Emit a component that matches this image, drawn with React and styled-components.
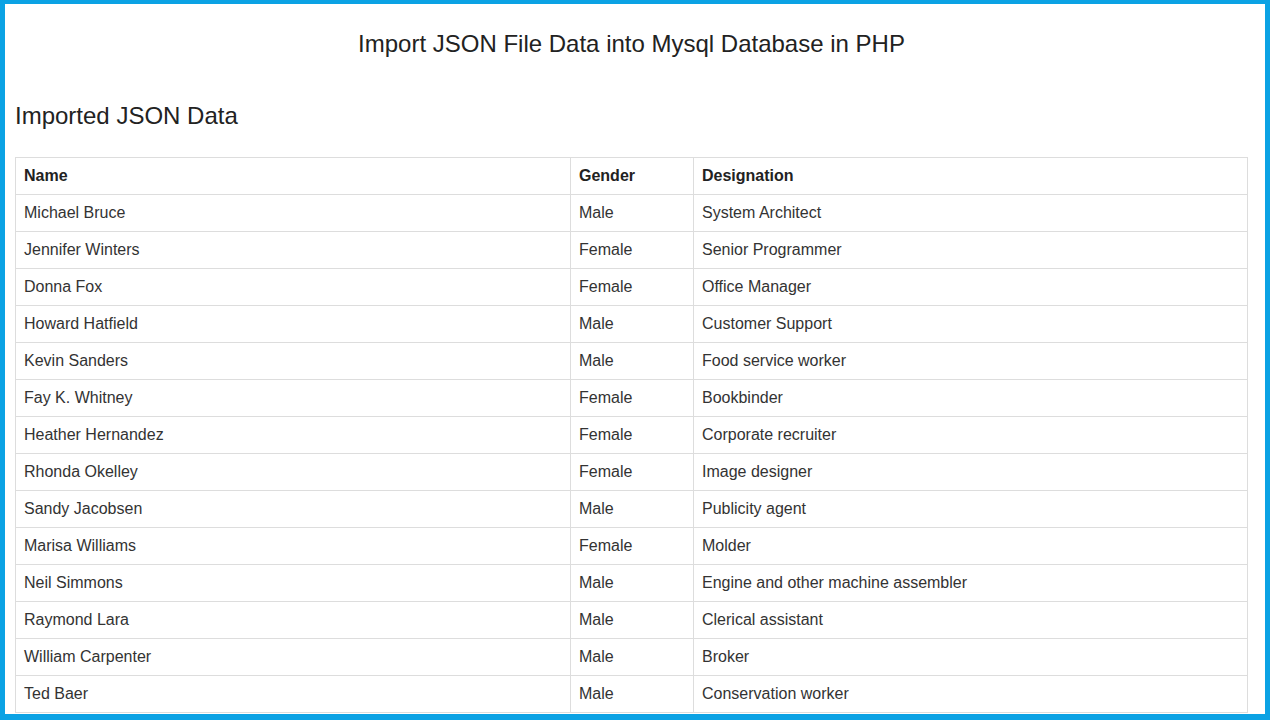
import React from 'react';
import styled, { createGlobalStyle } from 'styled-components';

const GlobalStyle = createGlobalStyle`
  html, body {
    margin: 0;
    padding: 0;
    background: #fff;
  }
  body {
    font-family: "Liberation Sans", Arial, Helvetica, sans-serif;
    font-size: 16px;
    line-height: 1.25;
    color: #333;
  }
`;

const Frame = styled.div`
  box-sizing: border-box;
  height: 720px;
  overflow: hidden;
  border-style: solid;
  border-color: #0ba2e4;
  border-width: 4px 5px 6px 5px;
  background: #fff;
`;

const Container = styled.div`
  padding: 27px 17px 0 10px;
`;

const PageTitle = styled.h3`
  margin: 0;
  font-size: 24px;
  font-weight: 400;
  line-height: 26px;
  text-align: center;
  color: #222;
`;

const SectionTitle = styled.h3`
  margin: 46px 0 28px;
  font-size: 24px;
  font-weight: 400;
  line-height: 26px;
  color: #222;
`;

const Table = styled.table`
  width: 100%;
  border-collapse: collapse;
  border-spacing: 0;
  border: 1px solid #ddd;
`;

const Cell = styled.td`
  box-sizing: border-box;
  height: 37px;
  padding: 8px;
  border: 1px solid #ddd;
  vertical-align: top;
  text-align: left;
  font-size: 16px;
  line-height: 20px;
  font-weight: ${({ $head }) => ($head ? 700 : 400)};
  color: ${({ $head }) => ($head ? '#222' : '#333')};
  width: ${({ $w }) => $w || 'auto'};
`;

const employees = [
  ['Michael Bruce', 'Male', 'System Architect'],
  ['Jennifer Winters', 'Female', 'Senior Programmer'],
  ['Donna Fox', 'Female', 'Office Manager'],
  ['Howard Hatfield', 'Male', 'Customer Support'],
  ['Kevin Sanders', 'Male', 'Food service worker'],
  ['Fay K. Whitney', 'Female', 'Bookbinder'],
  ['Heather Hernandez', 'Female', 'Corporate recruiter'],
  ['Rhonda Okelley', 'Female', 'Image designer'],
  ['Sandy Jacobsen', 'Male', 'Publicity agent'],
  ['Marisa Williams', 'Female', 'Molder'],
  ['Neil Simmons', 'Male', 'Engine and other machine assembler'],
  ['Raymond Lara', 'Male', 'Clerical assistant'],
  ['William Carpenter', 'Male', 'Broker'],
  ['Ted Baer', 'Male', 'Conservation worker'],
];

function App() {
  return (
    <>
      <GlobalStyle />
      <Frame>
        <Container>
          <PageTitle>Import JSON File Data into Mysql Database in PHP</PageTitle>
          <SectionTitle>Imported JSON Data</SectionTitle>
          <Table>
            <thead>
              <tr>
                <Cell as="th" $head $w="555px">Name</Cell>
                <Cell as="th" $head $w="123px">Gender</Cell>
                <Cell as="th" $head>Designation</Cell>
              </tr>
            </thead>
            <tbody>
              {employees.map(([name, gender, designation]) => (
                <tr key={name}>
                  <Cell>{name}</Cell>
                  <Cell>{gender}</Cell>
                  <Cell>{designation}</Cell>
                </tr>
              ))}
            </tbody>
          </Table>
        </Container>
      </Frame>
    </>
  );
}

export default App;
